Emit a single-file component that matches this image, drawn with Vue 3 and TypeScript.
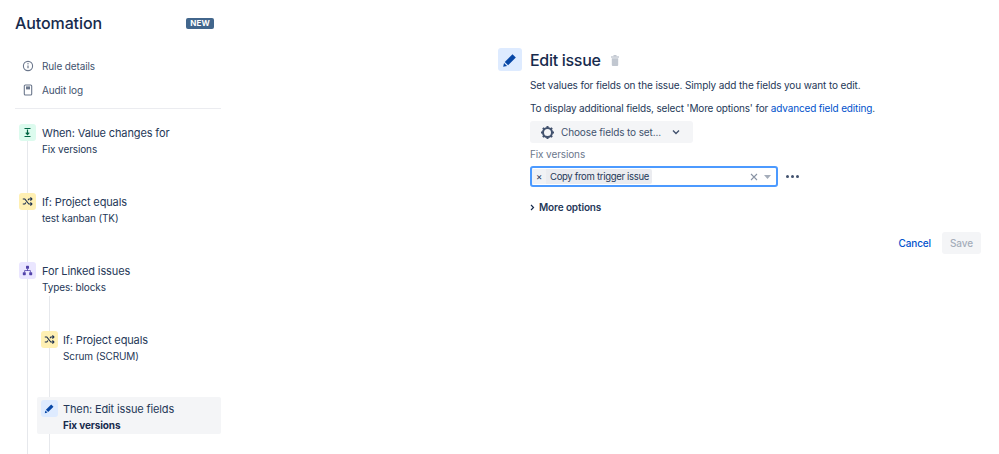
<script setup lang="ts">
interface Step {
  title: string
  sub: string
  kind: 'when' | 'if' | 'for' | 'then'
  nested?: boolean
  active?: boolean
}
const steps: Step[] = [
  { title: 'When: Value changes for', sub: 'Fix versions', kind: 'when' },
  { title: 'If: Project equals', sub: 'test kanban (TK)', kind: 'if' },
  { title: 'For Linked issues', sub: 'Types: blocks', kind: 'for' },
  { title: 'If: Project equals', sub: 'Scrum (SCRUM)', kind: 'if', nested: true },
  { title: 'Then: Edit issue fields', sub: 'Fix versions', kind: 'then', nested: true, active: true },
]
</script>

<template>
  <div class="page">
    <aside class="side">
      <div class="head">
        <h1>Automation</h1>
        <span class="lozenge">NEW</span>
      </div>
      <nav class="nav">
        <div class="nav-item">
          <svg width="12" height="12" viewBox="0 0 12 12" fill="none">
            <circle cx="6" cy="6" r="4.6" stroke="#6b778c" stroke-width="1.1" />
            <path d="M6 5.4v2.8" stroke="#6b778c" stroke-width="1.2" />
            <circle cx="6" cy="3.8" r=".7" fill="#6b778c" />
          </svg>
          <span>Rule details</span>
        </div>
        <div class="nav-item">
          <svg width="12" height="12" viewBox="0 0 12 12" fill="none">
            <rect x="2.3" y="1" width="7.4" height="10" rx="1" stroke="#6b778c" stroke-width="1.1" />
            <rect x="4" y="2.4" width="4" height="3" fill="#6b778c" />
          </svg>
          <span>Audit log</span>
        </div>
      </nav>
      <div class="steps">
        <div class="rail rail-main"></div>
        <div class="rail rail-nested"></div>
        <div
          v-for="s in steps"
          :key="s.title + s.sub"
          class="step"
          :class="{ nested: s.nested, active: s.active }"
        >
          <span class="badge" :class="s.kind">
            <svg v-if="s.kind === 'when'" width="11" height="11" viewBox="0 0 11 11" fill="none" stroke="#006644" stroke-width="1.2">
              <path d="M2.5 1.5h6M2.5 9.5h6M5.5 2.5v5" />
              <path d="M3.8 5.6l1.7 2 1.7-2" />
            </svg>
            <svg v-else-if="s.kind === 'if'" width="11" height="11" viewBox="0 0 11 11" fill="none" stroke="#172b4d" stroke-width="1.1">
              <path d="M.8 3h2l4 5h2.6M.8 8h2l1.2-1.5M6 4.300 6.800 3h2.600" />
              <path d="M8.400 1.500l1.500 1.500-1.500 1.500M8.400 6.500l1.500 1.500-1.500 1.500" />
            </svg>
            <svg v-else-if="s.kind === 'for'" width="11" height="11" viewBox="0 0 11 11" fill="#5243aa">
              <rect x="4" y=".8" width="3" height="3" rx=".6" />
              <rect x=".8" y="7.200" width="3" height="3" rx=".6" />
              <rect x="7.200" y="7.200" width="3" height="3" rx=".6" />
              <path d="M5.100 3.500h.8v1.800h2.800v2.200h-.8V6.100H3.100v1.400h-.8V5.300h2.800z" />
            </svg>
            <svg v-else width="11" height="11" viewBox="0 0 11 11" fill="#0747a6">
              <path d="M7.200 1.500l2.300 2.300-5.300 5.300-2.300-2.300zM1.400 7.500l2.100 2.100-2.700.6z" />
            </svg>
          </span>
          <div class="step-text">
            <div class="step-title">{{ s.title }}</div>
            <div class="step-sub">{{ s.sub }}</div>
          </div>
        </div>
      </div>
    </aside>

    <main class="main">
      <span class="main-icon">
        <svg width="16" height="16" viewBox="0 0 11 11" fill="#0747a6">
          <path d="M7.200 1.500l2.300 2.300-5.300 5.300-2.300-2.300zM1.400 7.500l2.100 2.100-2.700.6z" />
        </svg>
      </span>
      <div class="form">
        <div class="title-row">
          <h2>Edit issue</h2>
          <svg width="10" height="11" viewBox="0 0 10 11" fill="#c1c7d0">
            <rect x="3.500" y="0" width="3" height="1.500" />
            <rect x="1" y="1.300" width="8" height="1.400" />
            <path d="M1.800 3.200h6.400v6.800a1 1 0 0 1-1 1H2.800a1 1 0 0 1-1-1z" />
          </svg>
        </div>
        <p class="desc first">Set values for fields on the issue. Simply add the fields you want to edit.</p>
        <p class="desc second">To display additional fields, select 'More options' for <a>advanced field editing</a>.</p>
        <div class="choose">
          <svg width="15" height="15" viewBox="0 0 15 15" fill="none">
            <circle cx="7.500" cy="7.500" r="4.500" stroke="#42526e" stroke-width="2" />
            <path d="M7.500 1v2M7.500 12v2M1 7.500h2M12 7.500h2M2.900 2.900l1.400 1.400M10.700 10.700l1.400 1.400M2.900 12.100l1.400-1.400M10.700 4.300l1.400-1.400" stroke="#42526e" stroke-width="2" />
          </svg>
          <span class="choose-label">Choose fields to set...</span>
          <svg width="8" height="6" viewBox="0 0 8 6" fill="none">
            <path d="M1 1.500l3 3 3-3" stroke="#42526e" stroke-width="1.400" />
          </svg>
        </div>
        <label class="field-label">Fix versions</label>
        <div class="field-row">
          <div class="select">
            <span class="tag">
              <span class="tag-x">×</span>
              <span class="tag-text">Copy from trigger issue</span>
            </span>
            <span class="select-end">
              <svg width="8" height="8" viewBox="0 0 8 8" fill="none">
                <path d="M1 1l6 6M7 1L1 7" stroke="#8993a4" stroke-width="1.100" />
              </svg>
              <svg width="7" height="4" viewBox="0 0 7 4">
                <path d="M0 0h7L3.500 4z" fill="#a5adba" />
              </svg>
            </span>
          </div>
          <span class="dots"><i></i><i></i><i></i></span>
        </div>
        <div class="more">
          <svg width="5" height="7" viewBox="0 0 5 7" fill="none">
            <path d="M1 1l2.500 2.500L1 6" stroke="#172b4d" stroke-width="1.200" />
          </svg>
          <span>More options</span>
        </div>
        <div class="actions">
          <a class="cancel">Cancel</a>
          <span class="save">Save</span>
        </div>
      </div>
    </main>
  </div>
</template>

<style>
html, body { margin: 0; padding: 0; background: #fff; overflow: hidden; }
</style>

<style scoped>
.page {
  width: 999px;
  height: 454px;
  display: flex;
  overflow: hidden;
  font-family: Inter, "Liberation Sans", sans-serif;
  color: #172b4d;
  font-size: 10px;
  letter-spacing: -0.12px;
}
.side {
  width: 206px;
  margin-left: 15px;
  flex: none;
}
.head {
  display: flex;
  justify-content: space-between;
  align-items: center;
  height: 24px;
  margin-top: 11px;
  padding-right: 7px;
}
h1 {
  margin: 0;
  font-size: 16px;
  font-weight: 500;
  letter-spacing: -0.1px;
  color: #172b4d;
}
.lozenge {
  background: #42668c;
  color: #fff;
  font-size: 8px;
  font-weight: 700;
  line-height: 11px;
  padding: 0 4px;
  border-radius: 2px;
  letter-spacing: 0.2px;
}
.nav {
  margin-top: 23px;
  padding: 0 0 10px 7px;
  border-bottom: 1px solid #ebecf0;
  display: flex;
  flex-direction: column;
  gap: 8px;
}
.nav-item {
  display: flex;
  align-items: center;
  gap: 8px;
  height: 16px;
  color: #42526e;
}
.steps {
  position: relative;
  margin-top: 15px;
  height: 400px;
  display: flex;
  flex-direction: column;
  gap: 32px;
}
.rail {
  position: absolute;
  width: 1px;
  background: #e6e8ec;
  bottom: 0;
  z-index: 0;
}
.rail-main { left: 12px; top: 16px; }
.rail-nested { left: 34px; top: 172px; }
.step {
  position: relative;
  display: flex;
  gap: 6px;
  height: 37px;
  padding-left: 4px;
  box-sizing: border-box;
}
.step.nested { margin-left: 22px; gap: 5px; }
.step.active {
  background: #f4f5f7;
  border-radius: 2px;
  margin-top: -3px;
  margin-bottom: -3px;
  padding-top: 3px;
}
.badge {
  width: 17px;
  height: 17px;
  border-radius: 3px;
  display: flex;
  align-items: center;
  justify-content: center;
  flex: none;
  position: relative;
  z-index: 1;
}
.badge.when { background: #dcfbee; }
.badge.if { background: #fff0b3; }
.badge.for { background: #eae6ff; }
.badge.then { background: #deebff; }
.step-text { position: relative; z-index: 1; padding-top: 1px; }
.step-title { font-size: 11px; letter-spacing: -0.13px; line-height: 17px; color: #253858; }
.step-sub { font-size: 10px; line-height: 14px; color: #253858; }
.active .step-sub { font-weight: 700; color: #172b4d; }

.main {
  margin-left: 277px;
  display: flex;
  gap: 8px;
  padding-top: 48px;
  align-items: flex-start;
}
.main-icon {
  width: 24px;
  height: 23px;
  background: #deebff;
  border-radius: 3px;
  display: flex;
  align-items: center;
  justify-content: center;
  flex: none;
}
.form { width: 451px; }
.title-row {
  display: flex;
  align-items: center;
  gap: 9px;
  height: 24px;
}
h2 {
  margin: 0;
  font-size: 16px;
  font-weight: 500;
  letter-spacing: -0.3px;
  color: #172b4d;
}
.desc {
  margin: 0;
  line-height: 14px;
  color: #253858;
}
.desc.first { margin-top: 6px; }
.desc.second { margin-top: 9px; letter-spacing: -0.15px; }
.desc a { color: #0052cc; }
.choose {
  margin-top: 6px;
  width: 163px;
  height: 22px;
  background: #f4f5f7;
  border-radius: 3px;
  display: flex;
  align-items: center;
  padding-left: 10px;
  box-sizing: border-box;
  color: #42526e;
}
.choose-label { margin-left: 6px; margin-right: 11px; }
.field-label {
  display: block;
  margin-top: 4px;
  line-height: 14px;
  color: #6b778c;
}
.field-row {
  display: flex;
  align-items: center;
  gap: 8px;
  margin-top: 5px;
}
.select {
  width: 248px;
  height: 21px;
  box-sizing: border-box;
  border: 2px solid #4c9aff;
  border-radius: 3px;
  display: flex;
  align-items: center;
  justify-content: space-between;
  padding: 0 5px 0 0;
}
.tag {
  display: flex;
  align-items: stretch;
  height: 15px;
  background: #ebecf0;
  border-radius: 2px;
  line-height: 15px;
  font-size: 9.500px;
  letter-spacing: -0.3px;
  color: #253858;
}
.tag-x {
  width: 14px;
  text-align: center;
  background: #f1f2f5;
  margin-right: 1px;
}
.tag-text { padding: 0 3px; }
.select-end { display: flex; align-items: center; gap: 6px; }
.dots { display: flex; gap: 2px; }
.dots i { width: 3px; height: 3px; border-radius: 50%; background: #42526e; display: block; }
.more {
  display: flex;
  align-items: center;
  gap: 4px;
  margin-top: 14px;
  font-weight: 600;
  color: #253858;
}
.actions {
  display: flex;
  justify-content: flex-end;
  align-items: center;
  gap: 11px;
  margin-top: 19px;
}
.cancel { color: #0052cc; font-weight: 500; }
.save {
  background: #f4f5f7;
  color: #a5adba;
  height: 22px;
  line-height: 23px;
  width: 39px;
  text-align: center;
  border-radius: 3px;
  font-weight: 500;
}
</style>
